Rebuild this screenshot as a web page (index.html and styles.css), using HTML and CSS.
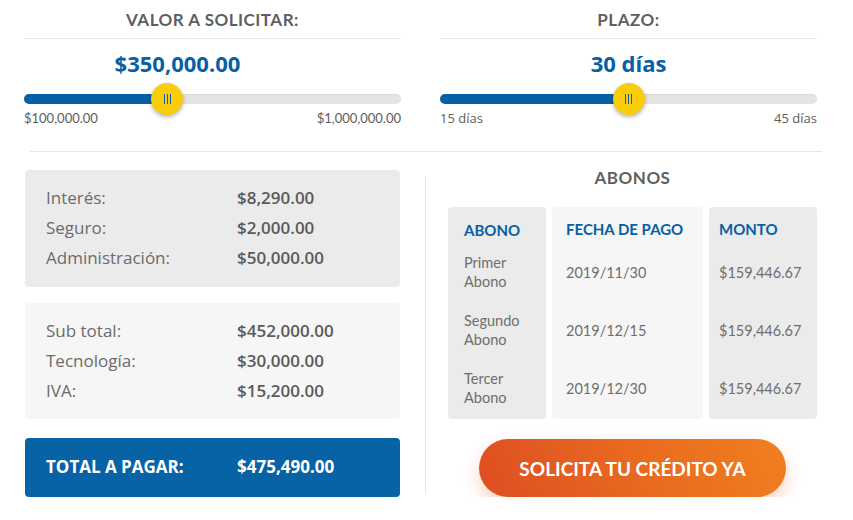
FILE: index.html
```html
<!DOCTYPE html>
<html lang="es">

<head>
    <meta charset="UTF-8">
    <title>Simulador de crédito</title>
    <link rel="stylesheet" href="styles.css">
</head>

<body>
    <div class="sliders">
        <div class="slider-block">
            <h2 class="block-title">VALOR A SOLICITAR:</h2>
            <div class="slider-value slider-value-amount">$350,000.00</div>
            <div class="range">
                <div class="range-fill" style="width: 38%"></div>
                <div class="range-thumb" style="left: 38%"><span></span><span></span><span></span></div>
            </div>
            <div class="range-labels range-labels-money">
                <span>$100,000.00</span>
                <span>$1,000,000.00</span>
            </div>
        </div>
        <div class="slider-block">
            <h2 class="block-title">PLAZO:</h2>
            <div class="slider-value">30 días</div>
            <div class="range">
                <div class="range-fill" style="width: 50%"></div>
                <div class="range-thumb" style="left: 50%"><span></span><span></span><span></span></div>
            </div>
            <div class="range-labels">
                <span>15 días</span>
                <span>45 días</span>
            </div>
        </div>
    </div>

    <hr class="section-divider">

    <div class="summary">
        <div class="costs">
            <div class="cost-box cost-box-dark">
                <div class="cost-row"><span>Interés:</span><strong>$8,290.00</strong></div>
                <div class="cost-row"><span>Seguro:</span><strong>$2,000.00</strong></div>
                <div class="cost-row"><span>Administración:</span><strong>$50,000.00</strong></div>
            </div>
            <div class="cost-box cost-box-light">
                <div class="cost-row"><span>Sub total:</span><strong>$452,000.00</strong></div>
                <div class="cost-row"><span>Tecnología:</span><strong>$30,000.00</strong></div>
                <div class="cost-row"><span>IVA:</span><strong>$15,200.00</strong></div>
            </div>
            <div class="cost-box cost-total">
                <div class="cost-row"><span>TOTAL A PAGAR:</span><strong>$475,490.00</strong></div>
            </div>
        </div>

        <div class="summary-divider"></div>

        <div class="payments">
            <h2 class="block-title payments-title">ABONOS</h2>
            <div class="payments-table">
                <div class="pay-col pay-col-name">
                    <div class="pay-head">ABONO</div>
                    <div class="pay-cell">Primer<br>Abono</div>
                    <div class="pay-cell">Segundo<br>Abono</div>
                    <div class="pay-cell">Tercer<br>Abono</div>
                </div>
                <div class="pay-col pay-col-date">
                    <div class="pay-head">FECHA DE PAGO</div>
                    <div class="pay-cell">2019/11/30</div>
                    <div class="pay-cell">2019/12/15</div>
                    <div class="pay-cell">2019/12/30</div>
                </div>
                <div class="pay-col pay-col-amount">
                    <div class="pay-head">MONTO</div>
                    <div class="pay-cell">$159,446.67</div>
                    <div class="pay-cell">$159,446.67</div>
                    <div class="pay-cell">$159,446.67</div>
                </div>
            </div>
            <button class="cta">SOLICITA TU CRÉDITO YA</button>
        </div>
    </div>
</body>

</html>
```

FILE: styles.css
```css
body {
    margin: 0;
    background: #fff;
    font-family: "Open Sans", "Liberation Sans", sans-serif;
    color: #666;
}

.sliders {
    display: grid;
    grid-template-columns: 377px 377px;
    column-gap: 39px;
    padding-left: 24px;
}

.block-title {
    margin: 0;
    font-family: Lato, "Liberation Sans", sans-serif;
    font-weight: 700;
    font-size: 17px;
    letter-spacing: 0.5px;
    line-height: 22px;
    color: #5f5f5f;
    text-align: center;
    padding-top: 9px;
    padding-bottom: 7px;
    border-bottom: 1px solid #e6e6e6;
}

.slider-value {
    margin-top: 10px;
    font-size: 22px;
    font-weight: 700;
    line-height: 28px;
    color: #0560a6;
    text-align: center;
}

.slider-value-amount {
    padding-right: 70px;
}

.range {
    position: relative;
    margin-top: 12px;
    height: 20px;
    display: flex;
    align-items: center;
}

.range::before {
    content: '';
    position: absolute;
    left: 0;
    right: 0;
    top: 5px;
    height: 10px;
    border-radius: 5px;
    background: #e4e4e4;
    box-shadow: inset 0 1px 1px rgba(0, 0, 0, 0.06);
}

.range-fill {
    position: relative;
    height: 10px;
    border-radius: 5px 0 0 5px;
    background: #0560a6;
}

.range-thumb {
    position: absolute;
    top: -6px;
    width: 32px;
    height: 32px;
    margin-left: -16px;
    border-radius: 50%;
    background: #f9cd0b;
    box-shadow: 0 2px 4px rgba(0, 0, 0, 0.3);
    display: flex;
    align-items: center;
    justify-content: center;
    gap: 2px;
}

.range-thumb span {
    width: 1px;
    height: 10px;
    background: #0560a6;
}

.range-labels {
    display: flex;
    justify-content: space-between;
    font-size: 13px;
    line-height: 18px;
    color: #5d5d5d;
}

.range-labels-money {
    font-family: Lato, "Liberation Sans", sans-serif;
}

.section-divider {
    margin: 24px 31px 0 30px;
    border: none;
    border-top: 1px solid #e6e6e6;
}

.summary {
    display: flex;
    align-items: flex-start;
    padding: 18px 0 0 25px;
}

.costs {
    width: 375px;
    display: flex;
    flex-direction: column;
    gap: 16px;
}

.cost-box {
    border-radius: 4px;
    padding: 13px 21px 13px;
}

.cost-box-dark {
    background: #ebebeb;
    padding-bottom: 14px;
}

.cost-box-light {
    background: #f6f6f6;
}

.cost-row {
    display: grid;
    grid-template-columns: 191px 1fr;
    font-size: 17px;
    line-height: 30px;
}

.cost-row span {
    color: #6b6b6b;
}

.cost-row strong {
    font-weight: 600;
    color: #5a5a5a;
}

.cost-total {
    margin-top: 3px;
    background: #0762a6;
    padding: 14px 21px 15px;
}

.cost-total .cost-row span,
.cost-total .cost-row strong {
    color: #fff;
    font-weight: 700;
}

.summary-divider {
    width: 1px;
    height: 317px;
    margin: 6px 22px 0 25px;
    background: #e6e6e6;
}

.payments {
    width: 369px;
    display: flex;
    flex-direction: column;
    align-items: center;
}

.payments-title {
    width: 100%;
    padding: 0;
    border: none;
    line-height: 16px;
}

.payments-table {
    margin-top: 21px;
    width: 100%;
    display: grid;
    grid-template-columns: 98px 151px 108px;
    column-gap: 6px;
}

.pay-col {
    border-radius: 4px;
    padding: 12px 0 2px;
    background: #ebebeb;
    font-family: Lato, "Liberation Sans", sans-serif;
}

.pay-col-name {
    padding-left: 16px;
}

.pay-col-date {
    background: #f6f6f6;
    padding-left: 14px;
}

.pay-col-amount {
    padding-left: 10px;
}

.pay-head {
    font-size: 15px;
    font-weight: 700;
    line-height: 20px;
    color: #0560a6;
    margin-bottom: 4px;
}

.pay-col-name .pay-head {
    margin-top: 1px;
    margin-bottom: 3px;
}

.pay-cell {
    height: 58px;
    display: flex;
    align-items: center;
    font-size: 14.5px;
    line-height: 19px;
    color: #6e6e6e;
}

.cta {
    margin-top: 20px;
    width: 307px;
    height: 58px;
    border: none;
    border-radius: 29px;
    background: linear-gradient(65deg, #dd4d22 0%, #e8691f 50%, #f17f20 100%);
    box-shadow: 0 8px 16px rgba(240, 110, 50, 0.3);
    font-family: Lato, "Liberation Sans", sans-serif;
    font-weight: 700;
    font-size: 19px;
    color: #fff;
    cursor: pointer;
}
```
